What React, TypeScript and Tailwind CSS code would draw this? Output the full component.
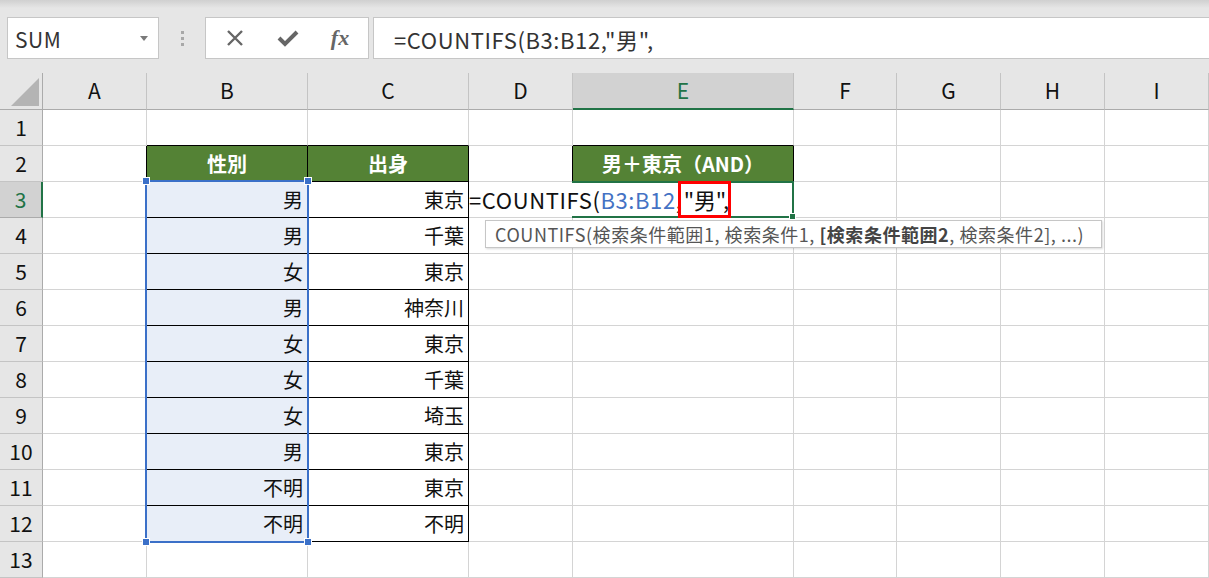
import React from "react";

const F = { fontFamily: '"Noto Sans CJK JP", "Noto Sans", sans-serif' };

const cols = ["A", "B", "C", "D", "E", "F", "G", "H", "I"];
const data: [string, string][] = [
  ["男", "東京"],
  ["男", "千葉"],
  ["女", "東京"],
  ["男", "神奈川"],
  ["女", "東京"],
  ["女", "千葉"],
  ["女", "埼玉"],
  ["男", "東京"],
  ["不明", "東京"],
  ["不明", "不明"],
];

function Cell({ r, c }: { r: number; c: number }) {
  const inTable = r >= 2 && r <= 12;
  const base = "h-[36px] border-r border-b flex items-center text-[20px] text-[#111]";
  let content: React.ReactNode = null;
  let bR = "border-r-[#d4d4d4]";
  let bB = "border-b-[#d4d4d4]";
  if (inTable && (c === 1 || c === 2)) {
    bR = "border-r-black";
    bB = "border-b-black";
  }
  if (inTable && c === 0) bR = "border-r-black";
  if (r === 1 && (c === 1 || c === 2)) bB = "border-b-black";
  if (r === 2 && c === 4) {
    bR = "border-r-black";
    bB = "border-b-black";
  }
  if (r === 2 && c === 3) bR = "border-r-black";
  if (r === 1 && c === 4) bB = "border-b-black";
  let bg = "bg-white";
  let align = "justify-end pr-[4px]";
  if (r === 2 && (c === 1 || c === 2 || c === 4)) {
    bg = "bg-[#548235]";
    align = "justify-center";
    content = (
      <span className="text-white font-bold text-[20px]">
        {c === 1 ? "性別" : c === 2 ? "出身" : "男＋東京（AND）"}
      </span>
    );
  }
  if (r >= 3 && r <= 12 && c === 1) {
    bg = "bg-[#e8eef8]";
    content = <span>{data[r - 3][0]}</span>;
  }
  if (r >= 3 && r <= 12 && c === 2) {
    content = <span>{data[r - 3][1]}</span>;
  }
  return (
    <div className={`${base} ${bR} ${bB} ${bg} ${align}`} style={F}>
      {content}
    </div>
  );
}

export default function App() {
  return (
    <div className="relative w-[1209px] h-[578px] overflow-hidden bg-white" style={F}>
      {/* Top formula bar area */}
      <div className="h-[73px] bg-[#e6e6e6] relative">
        <div className="h-[8px] bg-gradient-to-b from-[#d0d0d0] to-[#e6e6e6]" />
        <div className="flex items-start pl-[7px] pt-[9px]">
          <div className="w-[152px] h-[42px] bg-white border border-[#c6c6c6] flex items-center pl-[7px] pr-[10px] justify-between">
            <span className="text-[21px] text-[#333] tracking-[0.5px] pt-[3px]">SUM</span>
            <svg width="8" height="5" viewBox="0 0 8 5">
              <path d="M0 0 L8 0 L4 5 Z" fill="#7a7a7a" />
            </svg>
          </div>
          <div className="w-[46px] h-[42px] flex flex-col items-center justify-center gap-[3px]">
            <div className="w-[3px] h-[3px] bg-[#a8a8a8]" />
            <div className="w-[3px] h-[3px] bg-[#a8a8a8]" />
            <div className="w-[3px] h-[3px] bg-[#a8a8a8]" />
          </div>
          <div className="w-[164px] h-[42px] bg-white border border-[#c6c6c6] flex items-center">
            <div className="w-[55px] flex justify-center pl-[2px]">
              <svg width="18" height="18" viewBox="0 0 18 18">
                <path d="M2 2 L16 16 M16 2 L2 16" stroke="#666" strokeWidth="2.4" />
              </svg>
            </div>
            <div className="w-[53px] flex justify-center">
              <svg width="22" height="18" viewBox="0 0 22 18">
                <path d="M2 9 L8 15 L20 3" stroke="#666" strokeWidth="4" fill="none" />
              </svg>
            </div>
            <div className="w-[52px] flex justify-center">
              <span
                className="text-[22px] italic font-bold text-[#666] leading-none"
                style={{ fontFamily: '"Liberation Serif", "DejaVu Serif", serif' }}
              >
                fx
              </span>
            </div>
          </div>
          <div className="ml-[4px] flex-1 h-[42px] bg-white border border-[#c6c6c6] border-r-0 flex items-center pl-[20px]">
            <span className="text-[22px] text-[#333] tracking-[0.6px] pt-[2px]">=COUNTIFS(B3:B12,"男",</span>
          </div>
        </div>
      </div>

      {/* Grid */}
      <div className="grid grid-cols-[43px_104px_161px_161px_104px_221px_103px_104px_104px_1fr]">
        {/* header row */}
        <div className="h-[37px] bg-[#e6e6e6] border-r border-b border-[#ababab] relative">
          <svg className="absolute right-[3px] bottom-[3px]" width="28" height="28" viewBox="0 0 28 28">
            <path d="M28 0 L28 28 L0 28 Z" fill="#b4b4b4" />
          </svg>
        </div>
        {cols.map((c) =>
          c === "E" ? (
            <div
              key={c}
              className="h-[37px] bg-[#d2d2d2] border-r border-r-[#c0c0c0] border-b-2 border-b-[#217346] flex items-center justify-center text-[21px] text-[#217346]"
            >
              {c}
            </div>
          ) : (
            <div
              key={c}
              className="h-[37px] bg-[#e6e6e6] border-r border-r-[#c4c4c4] border-b border-b-[#ababab] flex items-center justify-center text-[21px] text-[#111]"
            >
              {c}
            </div>
          )
        )}
        {Array.from({ length: 13 }, (_, i) => i + 1).map((r) => (
          <React.Fragment key={r}>
            {r === 3 ? (
              <div className="h-[36px] bg-[#d2d2d2] border-r-2 border-r-[#217346] border-b border-b-[#ababab] flex items-center justify-center text-[21px] text-[#217346]">
                {r}
              </div>
            ) : (
              <div className="h-[36px] bg-[#e6e6e6] border-r border-r-[#ababab] border-b border-b-[#c4c4c4] flex items-center justify-center text-[21px] text-[#111]">
                {r}
              </div>
            )}
            {cols.map((_, c) => (
              <Cell key={c} r={r} c={c} />
            ))}
          </React.Fragment>
        ))}
      </div>

      {/* Selection B3:B12 */}
      <div className="absolute left-[145px] top-[180px] w-[164px] h-[363px] border-2 border-[#3b70c8] pointer-events-none" />
      <div className="absolute left-[142px] top-[177px] w-[8px] h-[8px] bg-[#3b70c8] border border-white" />
      <div className="absolute left-[304px] top-[177px] w-[8px] h-[8px] bg-[#3b70c8] border border-white" />
      <div className="absolute left-[142px] top-[538px] w-[8px] h-[8px] bg-[#3b70c8] border border-white" />
      <div className="absolute left-[304px] top-[538px] w-[8px] h-[8px] bg-[#3b70c8] border border-white" />

      {/* Active cell E3 */}
      <div className="absolute left-[572px] top-[181px] w-[222px] h-[37px] border-2 border-[#217346]" />
      <div className="absolute left-[789px] top-[213px] w-[7px] h-[7px] bg-[#217346] border border-white" />

      {/* In-cell editing text */}
      <div className="absolute left-[469px] top-[183px] h-[33px] bg-white flex items-center pr-[2px] text-[22px] text-[#111] whitespace-nowrap">
        <span className="tracking-[0.6px]">=COUNTIFS(</span>
        <span className="tracking-[0.6px] text-[#4472c4]">B3:B12</span>
        <span>,</span>
        <span className="pl-[2px] tracking-[-0.3px]">"男",</span>
      </div>
      <div className="absolute left-[678px] top-[181px] w-[53px] h-[37px] border-[3px] border-[#ff0000]" />

      {/* Tooltip */}
      <div className="absolute left-[485px] top-[220px] w-[617px] h-[28px] bg-white border border-[#c6c6c6] shadow-[1px_1px_2px_rgba(0,0,0,0.15)] flex items-center pl-[9px] text-[18px] tracking-[0.55px] text-[#555] whitespace-nowrap">
        <span>COUNTIFS(検索条件範囲1, 検索条件1,&nbsp;</span>
        <span className="font-bold text-[#444]">[検索条件範囲2</span>
        <span>, 検索条件2], ...)</span>
      </div>
    </div>
  );
}
